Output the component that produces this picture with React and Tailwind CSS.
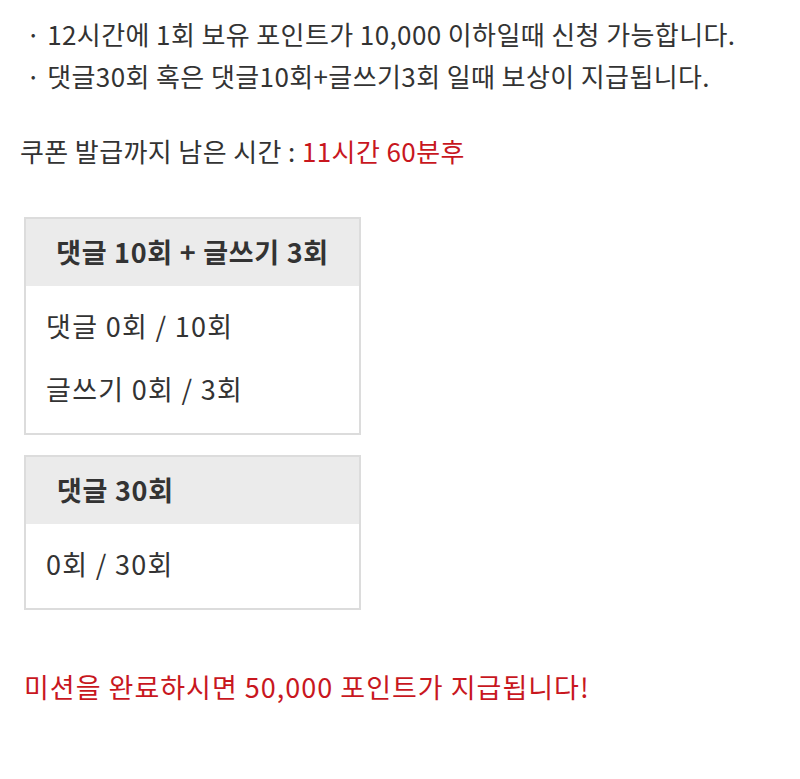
export default function App() {
  return (
    <div className="min-h-screen bg-white text-[#333] font-['Noto_Sans_CJK_KR','Noto_Sans',sans-serif]">
      {/* Notice */}
      <div className="pt-[13px] pl-[26px] text-[26px] leading-[42px] tracking-[0.4px]">
        <p>· 12시간에 1회 보유 포인트가 10,000 이하일때 신청 가능합니다.</p>
        <p>· 댓글30회 혹은 댓글10회+글쓰기3회 일때 보상이 지급됩니다.</p>
      </div>

      {/* Timer */}
      <p className="mt-[33px] pl-[20px] text-[26px] leading-[42px] tracking-[0.4px]">
        쿠폰 발급까지 남은 시간 : <span className="text-[#c8171e]">11시간 60분후</span>
      </p>

      {/* Missions */}
      <div className="mt-[45px] ml-[24px] w-[337px] flex flex-col gap-[20px]">
        <div className="border-2 border-[#dcdcdc]">
          <div className="h-[67px] bg-[#ebebeb] flex items-center justify-center text-[27px] font-bold tracking-[0.7px]">
            댓글 10회 + 글쓰기 3회
          </div>
          <div className="pt-[8px] pb-[13px] pl-[20px] text-[27px] leading-[63px] tracking-[1.3px]">
            <p>댓글 0회 / 10회</p>
            <p>글쓰기 0회 / 3회</p>
          </div>
        </div>

        <div className="border-2 border-[#dcdcdc]">
          <div className="h-[67px] bg-[#ebebeb] flex items-center pl-[31px] text-[27px] font-bold tracking-[0.7px]">
            댓글 30회
          </div>
          <div className="pt-[8px] pb-[13px] pl-[20px] text-[27px] leading-[63px] tracking-[1.3px]">
            <p>0회 / 30회</p>
          </div>
        </div>
      </div>

      {/* Reward */}
      <p className="mt-[56px] pl-[24px] text-[27px] leading-[42px] tracking-[1px] text-[#c8171e]">
        미션을 완료하시면 50,000 포인트가 지급됩니다!
      </p>
    </div>
  );
}
